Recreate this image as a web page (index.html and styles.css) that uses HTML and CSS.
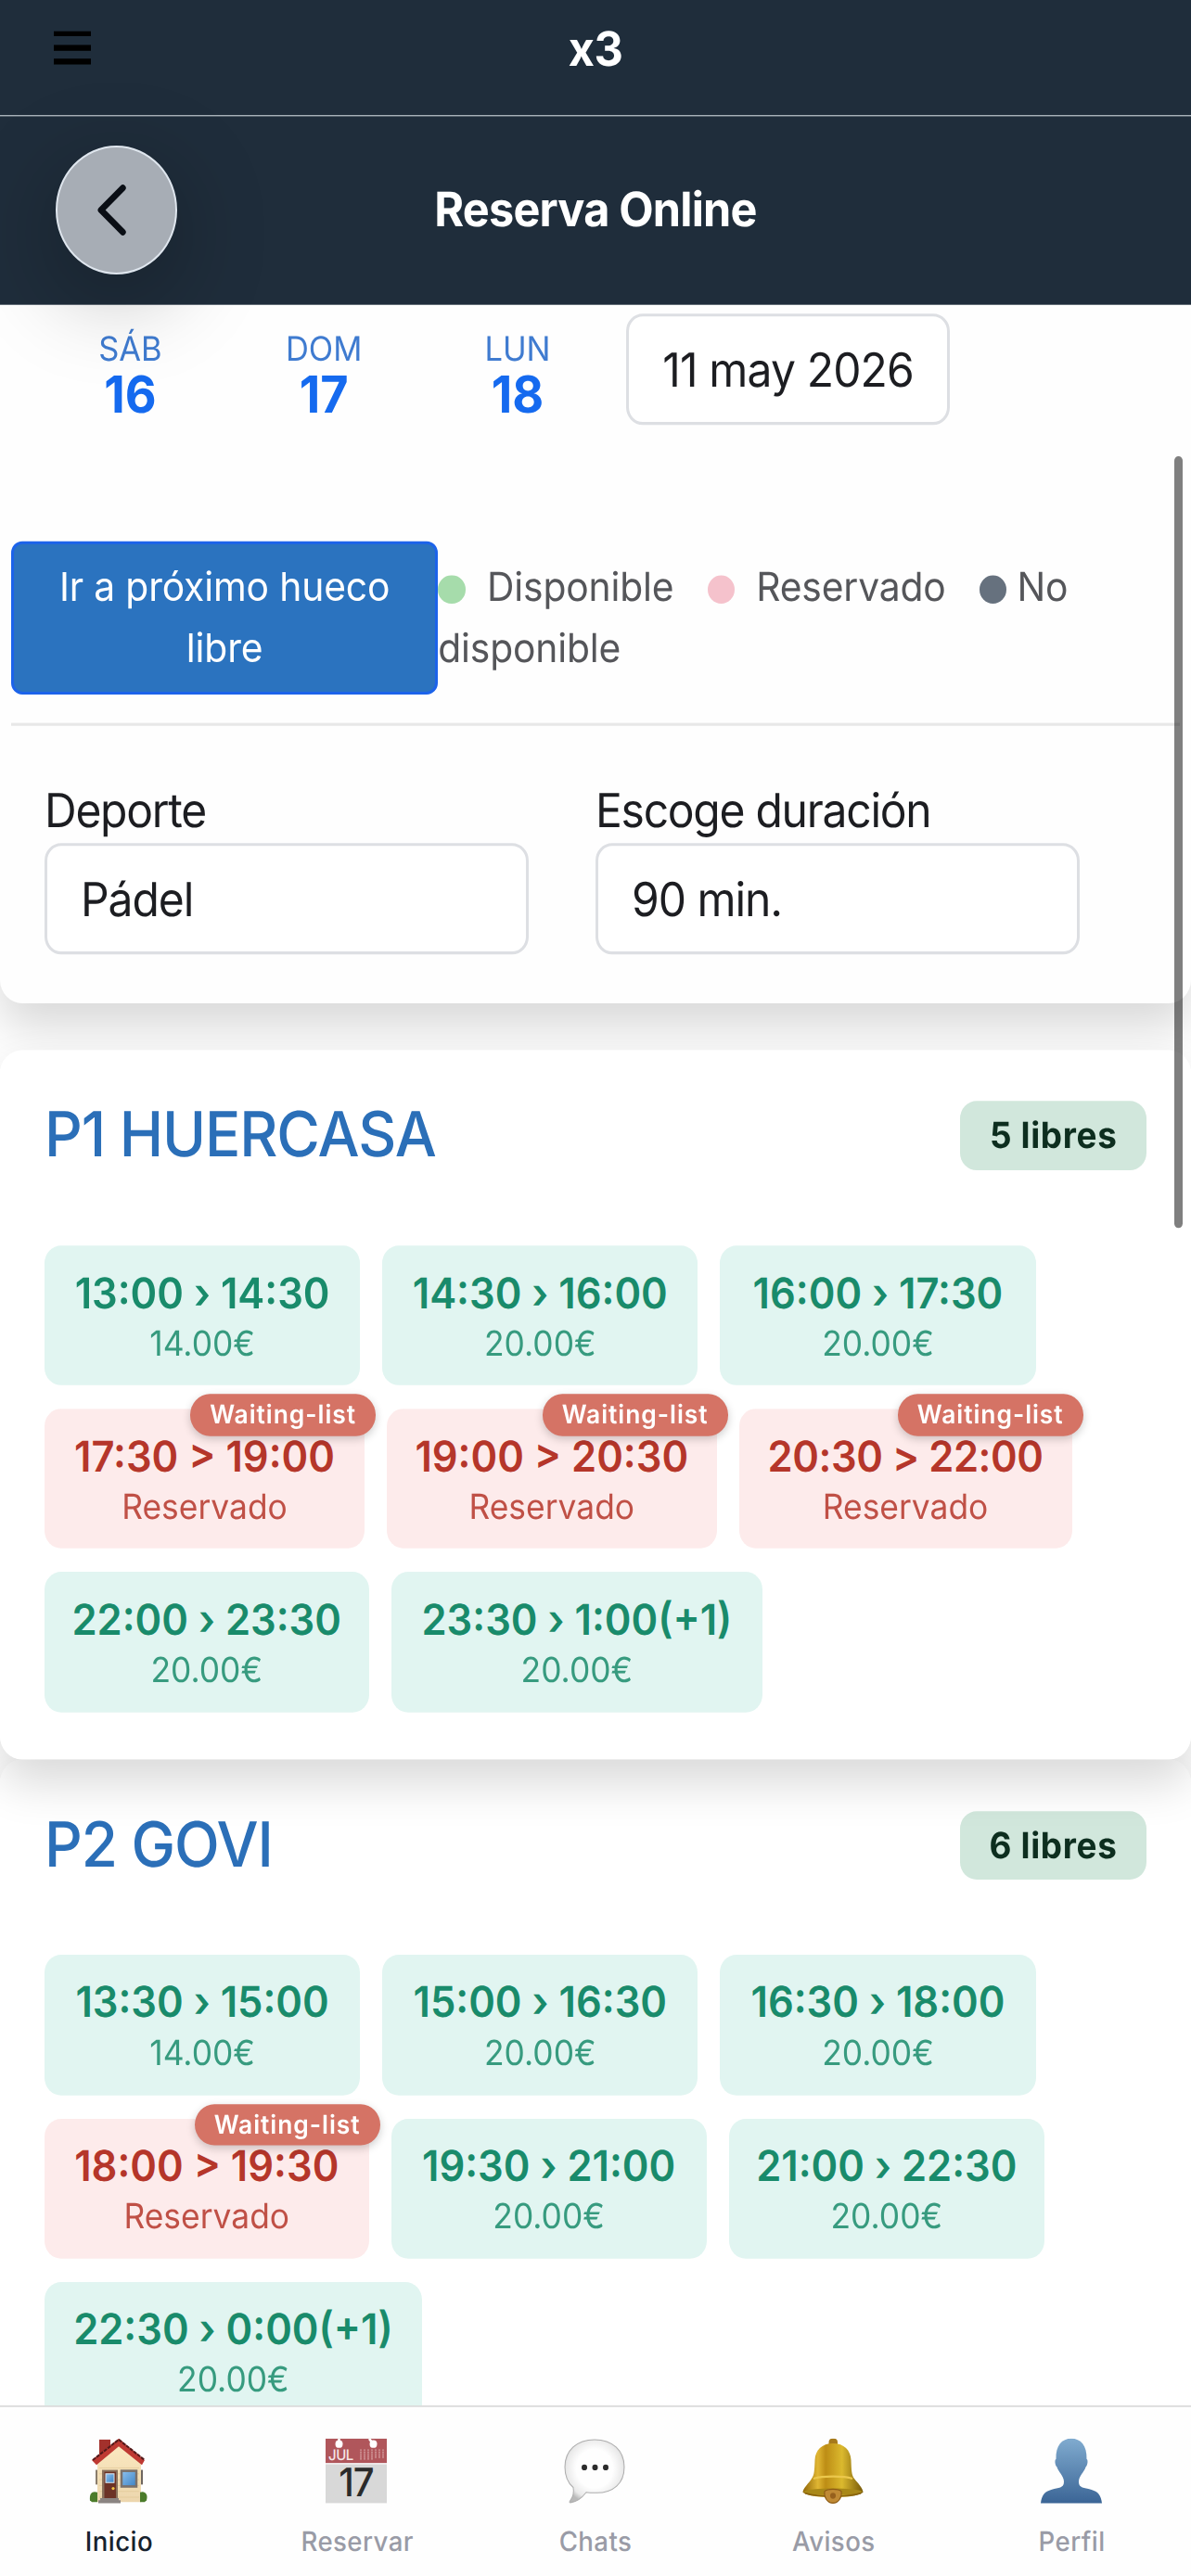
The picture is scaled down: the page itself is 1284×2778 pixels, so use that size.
FILE: index.html
```html
<!DOCTYPE html>
<html lang="es">
<head>
    <meta charset="UTF-8">
    <meta name="viewport" content="width=device-width, initial-scale=1.0">
    <title>Reserva Online</title>
    <link rel="stylesheet" href="styles.css">
</head>
<body>
    <div class="app">
        <header class="topbar">
            <div class="menu"><span></span><span></span><span></span></div>
            <div class="topbar-title">x3</div>
        </header>

        <div class="navbar">
            <button class="back">
                <svg viewBox="0 0 44 44"><path d="M24.3 14.2 L16.2 22 L24.3 29.8"/></svg>
            </button>
            <h1>Reserva Online</h1>
        </div>

        <main class="content">
            <section class="card filters">
                <div class="days">
                    <a class="day"><span>SÁB</span><b>16</b></a>
                    <a class="day"><span>DOM</span><b>17</b></a>
                    <a class="day"><span>LUN</span><b>18</b></a>
                    <div class="field date">11 may 2026</div>
                </div>

                <div class="legend-row">
                    <button class="next-free">Ir a próximo hueco libre</button>
                    <div class="legend">
                        <i class="dot free"></i><span class="legend-free">Disponible</span><i class="dot taken"></i><span class="legend-taken">Reservado</span><i class="dot none"></i><span class="legend-none">No</span> disponible
                    </div>
                </div>

                <div class="selects">
                    <div class="select">
                        <label>Deporte</label>
                        <div class="field">Pádel</div>
                    </div>
                    <div class="select">
                        <label>Escoge duración</label>
                        <div class="field">90 min.</div>
                    </div>
                </div>
            </section>

            <section class="card court court-first">
                <div class="court-head">
                    <h2>P1 HUERCASA</h2>
                    <span class="badge">5 libres</span>
                </div>
                <div class="slots">
                    <div class="slot"><b>13:00 › 14:30</b><span>14.00€</span></div>
                    <div class="slot"><b>14:30 › 16:00</b><span>20.00€</span></div>
                    <div class="slot"><b>16:00 › 17:30</b><span>20.00€</span></div>
                    <div class="slot reserved"><em>Waiting-list</em><b>17:30 &gt; 19:00</b><span>Reservado</span></div>
                    <div class="slot reserved wide"><em>Waiting-list</em><b>19:00 &gt; 20:30</b><span>Reservado</span></div>
                    <div class="slot reserved wider"><em>Waiting-list</em><b>20:30 &gt; 22:00</b><span>Reservado</span></div>
                    <div class="slot medium"><b>22:00 › 23:30</b><span>20.00€</span></div>
                    <div class="slot next-day"><b>23:30 › 1:00(+1)</b><span>20.00€</span></div>
                </div>
            </section>

            <section class="card court">
                <div class="court-head">
                    <h2>P2 GOVI</h2>
                    <span class="badge">6 libres</span>
                </div>
                <div class="slots">
                    <div class="slot"><b>13:30 › 15:00</b><span>14.00€</span></div>
                    <div class="slot"><b>15:00 › 16:30</b><span>20.00€</span></div>
                    <div class="slot"><b>16:30 › 18:00</b><span>20.00€</span></div>
                    <div class="slot reserved medium"><em>Waiting-list</em><b>18:00 &gt; 19:30</b><span>Reservado</span></div>
                    <div class="slot"><b>19:30 › 21:00</b><span>20.00€</span></div>
                    <div class="slot"><b>21:00 › 22:30</b><span>20.00€</span></div>
                    <div class="slot midnight"><b>22:30 › 0:00(+1)</b><span>20.00€</span></div>
                </div>
            </section>

            <div class="scrollbar"></div>
        </main>

        <nav class="tabs">
            <a class="tab active">
                <svg viewBox="0 0 66 66">
                    <defs>
                        <linearGradient id="wall" x1="0" y1="0" x2="0" y2="1"><stop offset="0" stop-color="#fbe8c0"/><stop offset="1" stop-color="#ecd6ad"/></linearGradient>
                        <linearGradient id="glass" x1="0" y1="0" x2="1" y2="1"><stop offset="0" stop-color="#8ec2ee"/><stop offset="1" stop-color="#3d82c4"/></linearGradient>
                    </defs>
                    <rect x="12" y="1" width="12" height="18" fill="#a3312c"/>
                    <rect x="8" y="32" width="3" height="15" fill="#8a7d6d"/>
                    <rect x="56" y="32" width="3" height="15" fill="#6e6660"/>
                    <path d="M10 24 L33 7 L57 24 V65 H10Z" fill="url(#wall)"/>
                    <path d="M12 30h43M12 36h43M12 42h43M12 48h43M12 54h43M12 60h43" stroke="#e0c898" stroke-width=".7"/>
                    <path d="M33 0 L61 22 L58 27 L33 8 L9 27 L4 22Z" fill="#bf3a33"/>
                    <path d="M5 22 L33 1 L61 22" fill="none" stroke="#52191a" stroke-width="2" stroke-dasharray="4 1"/>
                    <rect x="15" y="32" width="17" height="30" fill="#8a715c"/>
                    <rect x="17.500" y="34" width="12.500" height="28" fill="#6c3226"/>
                    <rect x="19" y="36" width="9" height="9" fill="url(#glass)" stroke="#dbe4ea" stroke-width="1"/>
                    <circle cx="27" cy="51" r="1.600" fill="#f3c342"/>
                    <rect x="36" y="33" width="16" height="16" fill="url(#glass)" stroke="#7b716a" stroke-width="2.500"/>
                    <path d="M13 61h20v2h2v3H11v-3h2z" fill="#8b8482"/>
                    <path d="M2 63 C1 56 5 53 10 55 V65 H4Z" fill="#4b7c2b"/>
                    <path d="M56 55 C61 53 65 57 63 63 L61 65 H56Z" fill="#4b7c2b"/>
                </svg>
                <span>Inicio</span>
            </a>
            <a class="tab">
                <svg viewBox="0 0 66 66">
                    <rect width="66" height="66" fill="#d8d8d8"/>
                    <rect width="66" height="25" fill="#b0565b"/>
                    <rect y="25" width="66" height="1.500" fill="#f3eded"/>
                    <path d="M14.500 0v5M47 0l4 5" stroke="#fff" stroke-width="2.500"/>
                    <circle cx="14.500" cy="5.500" r="4" fill="#fff"/>
                    <circle cx="51.500" cy="5.500" r="4" fill="#fff"/>
                    <path d="M38 11v11M42 11v11M46 11v11M50 11v11M54 11v9M58 11v9M62 11v9" stroke="#e2b7b9" stroke-width="1.300" stroke-dasharray="1.300 .8"/>
                    <text class="cal-month" x="3" y="22">JUL</text>
                    <text class="cal-day" x="33" y="59">17</text>
                </svg>
                <span>Reservar</span>
            </a>
            <a class="tab">
                <svg viewBox="0 0 66 66">
                    <defs>
                        <radialGradient id="bubble" cx=".5" cy=".46" r=".56"><stop offset=".55" stop-color="#fefefe"/><stop offset=".85" stop-color="#e9e9e9"/><stop offset="1" stop-color="#b9b9b9"/></radialGradient>
                    </defs>
                    <path d="M33 1 C52 1 65 12 65 29 C65 46 53 55.500 35 55.500 C30 55.500 27 55.500 24 55 C20 60 14 65 7 65.500 C5.500 65.500 6 64.500 7 63 C10 59 11 55 10 50 C4 45 1 38 1 29 C1 12 14 1 33 1Z" fill="url(#bubble)" stroke="#adadad" stroke-width="1"/>
                    <circle cx="22" cy="29.500" r="3" fill="#2d2d2d"/><circle cx="33.500" cy="29.500" r="3" fill="#2d2d2d"/><circle cx="45" cy="29.500" r="3" fill="#2d2d2d"/>
                </svg>
                <span>Chats</span>
            </a>
            <a class="tab">
                <svg viewBox="0 0 66 66">
                    <defs>
                        <linearGradient id="gold" x1="0" x2="1"><stop offset="0" stop-color="#8f6508"/><stop offset=".25" stop-color="#e0b633"/><stop offset=".38" stop-color="#bd8d15"/><stop offset=".65" stop-color="#dbb92e"/><stop offset="1" stop-color="#765809"/></linearGradient>
                    </defs>
                    <rect x="28.500" y="0" width="9.500" height="9" rx="4" fill="#a67a1c"/>
                    <path d="M33 5 C45 5 52 12 52.500 22 C53 33 53 37 56 41 C60 46 65 50 65.500 55 C60 59 48 60 33 60 C18 60 6 59 .5 55 C1 50 7 46 10 41 C13 37 13 33 13.500 22 C14 12 21 5 33 5Z" fill="url(#gold)"/>
                    <path d="M12 41 C22 38 44 38 54 41" fill="none" stroke="#ecc84c" stroke-width="2"/>
                    <path d="M1 54 C12 50 54 50 65 54 C60 59 6 59 1 54Z" fill="#a98818"/>
                    <path d="M3 56 C16 60 50 60 63 56" fill="none" stroke="#8a640f" stroke-width="1.500"/>
                    <path d="M24 54 C27 51 39 51 42 54 C43 60 39 66 33 66 C27 66 23 60 24 54Z" fill="#c08a35" stroke="#8d5b14" stroke-width="1"/>
                    <circle cx="33" cy="58.500" r="3" fill="#96601d"/>
                </svg>
                <span>Avisos</span>
            </a>
            <a class="tab">
                <svg viewBox="0 0 66 66">
                    <defs>
                        <linearGradient id="person" x1="0" y1="0" x2="0" y2="1"><stop offset="0" stop-color="#80abcf"/><stop offset="1" stop-color="#3b6596"/></linearGradient>
                    </defs>
                    <path d="M33 0 C43 0 50 7 49.500 21 C51 21 51 27 48.500 29 C47 34 41 38 41 44 C41 51 47 50 54 52 C62 54 65 58 66 66 H0 C1 58 4 54 12 52 C19 50 25 51 25 44 C25 38 19 34 17.500 29 C15 27 15 21 16.500 21 C16 7 23 0 33 0Z" fill="url(#person)"/>
                </svg>
                <span>Perfil</span>
            </a>
        </nav>
    </div>
</body>
</html>
```
FILE: styles.css
```css
* {
    box-sizing: border-box;
}

body {
    margin: 0;
    height: 2778px;
    overflow: hidden;
    background: #fefefe;
    font-family: 'Inter', 'Liberation Sans', sans-serif;
    color: #1c1d21;
    text-rendering: geometricPrecision;
}

/* 428 x 879 layout, enlarged to the full window */
.app {
    width: 428px;
    height: 879px;
    display: flex;
    flex-direction: column;
    zoom: 3;
    transform: scaleY(1.0535);
    transform-origin: 0 0;
}

h1, h2 {
    margin: 0;
}

button {
    font-family: inherit;
    margin: 0;
    padding: 0;
}

/* header */
.topbar {
    height: 39.5px;
    flex: none;
    display: grid;
    grid-template-columns: 60px 1fr 60px;
    background: #1f2d3b;
    border-bottom: 0.34px solid #e6edf2;
}

.menu {
    display: flex;
    flex-direction: column;
    gap: 2.85px;
    padding: 10.6px 0 0 19.4px;
}

.menu span {
    width: 13.4px;
    height: 1.9px;
    background: #000;
}

.topbar-title {
    padding-top: 6.6px;
    text-align: center;
    line-height: 20px;
    font-size: 16.2px;
    font-weight: 650;
    letter-spacing: -0.2px;
    color: #fff;
}

.navbar {
    height: 64.4px;
    flex: none;
    display: grid;
    grid-template-columns: 64px 1fr 64px;
    align-items: center;
    padding: 0 20px;
    background: #1f2d3b;
    position: relative;
    z-index: 5;
}

.navbar h1 {
    text-align: center;
    font-size: 16.2px;
    line-height: 20px;
    font-weight: 650;
    letter-spacing: -0.27px;
    color: #fff;
}

.back {
    width: 43.8px;
    height: 44px;
    border-radius: 50%;
    border: 0.67px solid #dfe6ee;
    background: #a7adb5;
    box-shadow: 0 8px 32px rgba(0, 0, 0, 0.28);
}

.back svg {
    display: block;
    width: 100%;
    height: 100%;
    fill: none;
    stroke: #0a0e15;
    stroke-width: 2.3;
    stroke-linecap: round;
    stroke-linejoin: round;
}

/* content */
.content {
    flex: 1;
    min-height: 0;
    overflow: hidden;
    position: relative;
}

.card {
    border-radius: 8px;
    box-shadow: 0 8px 16px rgba(0, 0, 0, 0.15);
    background: rgba(255, 255, 255, 0.9);
    position: relative;
}

.filters {
    height: 238.400px;
    padding: 3px 4px 0;
    background: #fefefe;
    border-radius: 0 0 8px 8px;
}

.days {
    display: flex;
    padding-left: 8px;
}

.day {
    width: 69.6px;
    padding-top: 4.8px;
    display: flex;
    flex-direction: column;
    align-items: center;
}

.day span {
    font-size: 11.5px;
    line-height: 15.500px;
    color: #3f7bd0;
}

.day b {
    font-size: 17.4px;
    line-height: 14.500px;
    font-weight: 650;
    color: #156aef;
}

.field {
    height: 38px;
    padding: 0 12px;
    border: 1px solid #dddfe3;
    border-radius: 6px;
    background: #fff;
    font-size: 16px;
    line-height: 36.800px;
    letter-spacing: -0.35px;
    white-space: nowrap;
}

.date {
    width: 116.300px;
    margin-left: 4.300px;
    letter-spacing: -0.28px;
}

.legend-row {
    display: flex;
    margin-top: 39.700px;
    padding-bottom: 9.800px;
    border-bottom: 1px solid #e8e8e8;
    font-size: 13.6px;
    line-height: 21.200px;
    letter-spacing: -0.05px;
}

.next-free {
    width: 153.400px;
    flex: none;
    padding: 4px 12px;
    border: 1px solid #1c63ea;
    border-radius: 4px;
    background: #2b73bf;
    color: #fff;
    font-size: inherit;
    line-height: inherit;
    letter-spacing: inherit;
}

.legend {
    padding-top: 5px;
    color: #55565a;
}

.dot {
    display: inline-block;
    width: 9.8px;
    height: 9.8px;
    border-radius: 50%;
    vertical-align: -1.2px;
}

.free {
    background: #a6dcab;
}

.taken {
    background: #f5c2cc;
}

.none {
    background: #66717e;
}

.legend-free {
    margin: 0 12.2px 0 7.8px;
}

.legend-taken {
    margin: 0 12px 0 7.6px;
}

.legend-none {
    margin-left: 3.8px;
}

.selects {
    display: flex;
    gap: 24px;
    padding: 17.4px 12px 0;
}

.select {
    width: 174px;
}

.select label {
    display: block;
    font-size: 16px;
    line-height: 22.600px;
    letter-spacing: -0.42px;
}

/* courts */
.court {
    height: 300px;
    padding: 17px 16px 0;
}

.court-first {
    height: 242.100px;
    margin-top: 16px;
    z-index: 1;
}

.court-head {
    display: flex;
    justify-content: space-between;
    align-items: center;
    height: 24.400px;
}

.court-head h2 {
    font-size: 21.2px;
    line-height: 24px;
    font-weight: 500;
    color: #2b6fb8;
    letter-spacing: -0.37px;
}

.badge {
    padding: 0 10.5px;
    border-radius: 6px;
    background: #d1e7dc;
    color: #0d2e1f;
    font-size: 12.3px;
    line-height: 23.400px;
    font-weight: 700;
    letter-spacing: 0.22px;
}

.slots {
    display: flex;
    flex-wrap: wrap;
    gap: 8px;
    margin-top: 25.300px;
}

.slot {
    width: 113.4px;
    height: 47.750px;
    padding-top: 7px;
    border-radius: 6px;
    background: #e1f5f1;
    color: #198b6b;
    text-align: center;
    position: relative;
}

.slot b {
    display: block;
    font-size: 14.5px;
    line-height: 19.200px;
    font-weight: 600;
    white-space: nowrap;
}

.slot span {
    display: block;
    font-size: 11.8px;
    line-height: 14.500px;
    opacity: 0.85;
}

.reserved {
    width: 115px;
    background: #fdebeb;
    color: #b5362a;
}

.medium {
    width: 116.500px;
}

.wide {
    width: 118.500px;
}

.wider {
    width: 119.700px;
}

.wider b {
    letter-spacing: -0.15px;
}

.next-day {
    width: 133.600px;
}

.midnight {
    width: 135.600px;
}

.slot em {
    position: absolute;
    top: -5px;
    right: -4px;
    padding: 0 7px;
    border-radius: 7.1px;
    background: #d57365;
    box-shadow: 0 1px 3px rgba(0, 0, 0, 0.2);
    color: #fff;
    font-size: 8.8px;
    line-height: 14.300px;
    font-style: normal;
    font-weight: 600;
    letter-spacing: 0.32px;
    white-space: nowrap;
}

.scrollbar {
    position: absolute;
    z-index: 3;
    top: 51.8px;
    right: 3px;
    width: 3px;
    height: 263.300px;
    border-radius: 1.5px;
    background: rgba(0, 0, 0, 0.5);
}

/* bottom tabs */
.tabs {
    height: 58.300px;
    flex: none;
    display: grid;
    grid-template-columns: repeat(5, 1fr);
    border-top: 0.67px solid #dcdcdc;
    background: #fefefe;
}

.tab {
    display: flex;
    flex-direction: column;
    align-items: center;
    padding-top: 10.7px;
    font-size: 9.2px;
    line-height: 12px;
    font-weight: 500;
    letter-spacing: 0.15px;
    color: #999ba6;
}

.tab svg {
    width: 22px;
    height: 22.200px;
    margin: 0 0.5px 6.700px 0;
}

.active {
    color: #17222e;
}

.cal-month {
    font-size: 15px;
    letter-spacing: -0.5px;
    fill: #f5e4e4;
}

.cal-day {
    font-size: 40px;
    font-weight: 500;
    letter-spacing: -1px;
    text-anchor: middle;
    fill: #2b2b2b;
}
```
